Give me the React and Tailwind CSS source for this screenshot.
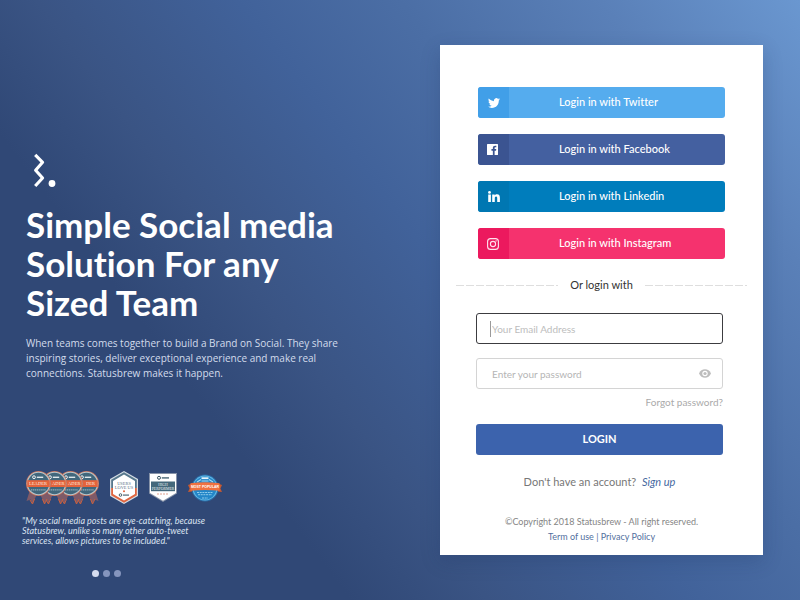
import React from "react";

const FONT = "font-[Lato,'Open_Sans',sans-serif] [font-variant-ligatures:none]";

function Logo() {
  return (
    <svg className="ml-[7px] h-[36px] w-[26px]" viewBox="0 0 26 36" role="img" aria-label="Statusbrew">
      <path
        d="M2.2 1.8 L9.6 9.3 L2.6 17.3 L9.6 25 L2.2 33"
        fill="none"
        stroke="#fff"
        strokeWidth="3.1"
        strokeLinejoin="round"
        strokeLinecap="butt"
      />
      <circle cx="19" cy="30.5" r="3.4" fill="#fff" />
    </svg>
  );
}

function Medal({ x, label, textX }) {
  return (
    <g transform={`translate(${x} 0)`}>
      <path
        d="M4 20 L0.5 31 L4.5 29.5 L6.5 34 L10.5 25 H14.5 L18.5 34 L20.5 29.5 L24.5 31 L21 20Z"
        fill="#7f5a68"
      />
      <path d="M4 30 L6.5 34 L8.5 29 M16.5 29 L18.5 34 L21 29" stroke="#c8603f" strokeWidth="1" fill="none" />
      <circle cx="12.5" cy="13.5" r="12.5" fill="#c9745b" />
      <circle cx="12.5" cy="13.5" r="11.7" fill="#b9c7cd" />
      <circle cx="12.5" cy="13.5" r="10.7" fill="#41677c" />
      <circle cx="8" cy="7.2" r="1.4" fill="none" stroke="#fff" strokeWidth="0.9" />
      <path d="M10.8 7.3 H17.2" stroke="#dfe8ec" strokeWidth="1.4" />
      <path d="M1.2 10.2 H23.8 V17 H1.2Z" fill="#e4633c" />
      <text x={textX} y="15.3" fontSize="4.6" fill="#ffe9df" fontFamily="Liberation Serif">
        {label}
      </text>
      <path d="M5 19.8 H20" stroke="#8fadb9" strokeWidth="1.2" strokeDasharray="1.3 .6" />
    </g>
  );
}

const MEDALS = [
  { x: 48, label: "DER", textX: 12 },
  { x: 32, label: "ADER", textX: 10 },
  { x: 16, label: "ADER", textX: 10 },
  { x: 0, label: "LEADER", textX: 3 },
];

function LeaderBadges() {
  return (
    <svg className="h-[35px] w-[73px]" viewBox="0 0 73 35" role="img" aria-label="Leader awards">
      {MEDALS.map((m) => (
        <Medal key={m.x} {...m} />
      ))}
    </svg>
  );
}

function UsersBadge() {
  return (
    <svg className="h-[33px] w-[28px]" viewBox="0 0 28 33" role="img" aria-label="Users love us">
      <path d="M14 0 L28 8 V25 L14 33 L0 25 V8Z" fill="#d5dde4" />
      <path d="M14 1.3 L26.8 8.7 V17 H1.2 V8.7Z" fill="#57788d" />
      <path d="M1.2 17 H26.8 V24.3 L14 31.7 L1.2 24.3Z" fill="#e0653f" />
      <path d="M14 3.6 L25 10 V23 L14 29.4 L3 23 V10Z" fill="#fff" />
      <g fontFamily="Liberation Serif" fontSize="4.4" textAnchor="middle" fill="#58717f">
        <text x="14" y="13.6">USERS</text>
        <text x="14" y="17.8">LOVE US</text>
      </g>
      <circle cx="14" cy="20.2" r="1" fill="#e0653f" />
      <circle cx="10.5" cy="24" r="1.3" fill="none" stroke="#35515f" strokeWidth=".9" />
      <path d="M13 24.1 H19" stroke="#5c7480" strokeWidth="1.3" />
    </svg>
  );
}

function PerformerBadge() {
  return (
    <svg className="h-[29px] w-[28px]" viewBox="0 0 28 29" role="img" aria-label="High performer">
      <path d="M0 0 H28 V20.5 L14 29 L0 20.5Z" fill="#8793a8" />
      <path d="M1 1 H27 V20 L14 27.8 L1 20Z" fill="#fff" />
      <path d="M2 8.5 H26 V18.2 H2Z" fill="#44687b" />
      <circle cx="10" cy="4.8" r="1.5" fill="none" stroke="#35515f" strokeWidth="1" />
      <path d="M12.8 4.9 H20" stroke="#55717f" strokeWidth="1.5" />
      <g fontFamily="Liberation Serif" textAnchor="middle" fill="#edf3f5">
        <text x="14" y="12.6" fontSize="3.8">HIGH</text>
        <text x="14" y="16.8" fontSize="3.8">PERFORMER</text>
      </g>
      <path d="M8 21 H20" stroke="#e1a18e" strokeWidth="1" strokeDasharray="2 1" />
    </svg>
  );
}

function PopularBadge() {
  return (
    <svg className="h-[28px] w-[34px]" viewBox="0 0 34 28" role="img" aria-label="Most popular">
      <circle cx="17" cy="14" r="13.5" fill="#2a6ea9" />
      <circle cx="17" cy="14" r="12.5" fill="#65bbe7" />
      <circle cx="17" cy="14" r="11.5" fill="#2386c8" />
      <path d="M13.5 4.2 H20.5" stroke="#e4f4fb" strokeWidth="1.8" />
      <path d="M9 8 L13 5.6 M25 8 L21 5.6 M13.5 7 H20.5" stroke="#a9d9ef" strokeWidth="1.2" />
      <path d="M0 11 L4 9.5 V17.5 L0 18 L1.6 14.5Z M34 11 L30 9.5 V17.5 L34 18 L32.4 14.5Z" fill="#c95a31" />
      <path d="M2.4 9.2 Q17 7.2 31.6 9.2 V16.8 Q17 15.4 2.4 16.8Z" fill="#f0713f" />
      <text x="17" y="13.6" fontSize="3.5" fontWeight="bold" textAnchor="middle" fill="#fff" fontFamily="Liberation Sans">
        MOST POPULAR
      </text>
      <path d="M9 18.5 H25 M10 20.7 H24 M14 24 H20" stroke="#9ad2ee" strokeWidth=".9" strokeDasharray="2 .7" />
    </svg>
  );
}

function TwitterIcon() {
  return (
    <svg className="size-[12px]" viewBox="0 0 24 24" fill="#fff" aria-hidden="true">
      <path d="M23.953 4.57a10 10 0 0 1-2.825.775 4.958 4.958 0 0 0 2.163-2.723c-.951.555-2.005.959-3.127 1.184a4.92 4.92 0 0 0-8.384 4.482C7.69 8.095 4.067 6.13 1.64 3.162a4.822 4.822 0 0 0-.666 2.475c0 1.71.87 3.213 2.188 4.096a4.904 4.904 0 0 1-2.228-.616v.06a4.923 4.923 0 0 0 3.946 4.827 4.996 4.996 0 0 1-2.212.085 4.936 4.936 0 0 0 4.604 3.417 9.867 9.867 0 0 1-6.102 2.105c-.39 0-.779-.023-1.17-.067a13.995 13.995 0 0 0 7.557 2.209c9.053 0 13.998-7.496 13.998-13.985 0-.21 0-.42-.015-.63A9.935 9.935 0 0 0 24 4.59z" />
    </svg>
  );
}

function FacebookIcon() {
  return (
    <svg className="-ml-[3px] size-[11px]" viewBox="0 0 24 24" fill="#fff" aria-hidden="true">
      <path d="M22.7 0H1.3C.6 0 0 .6 0 1.3v21.4c0 .7.6 1.3 1.3 1.3h11.5v-9.3H9.7v-3.6h3.1V8.4c0-3.1 1.9-4.8 4.7-4.8 1.3 0 2.5.1 2.8.1v3.3h-1.9c-1.5 0-1.8.7-1.8 1.8v2.3h3.6l-.5 3.6h-3.1V24h6.1c.7 0 1.3-.6 1.3-1.3V1.3c0-.7-.6-1.3-1.3-1.3z" />
    </svg>
  );
}

function LinkedinIcon() {
  return (
    <svg className="h-[11px] w-[12px]" viewBox="0 0 12 11" fill="#fff" aria-hidden="true">
      <circle cx="1.5" cy="1.4" r="1.4" />
      <path d="M.2 3.5h2.7V11H.2zM4.2 3.5h2.5v1c.4-.7 1.2-1.2 2.3-1.2 2.4 0 2.9 1.6 2.9 3.6V11H9.2V7.5c0-.9 0-1.9-1.1-1.9s-1.3 1-1.3 1.9V11H4.2z" />
    </svg>
  );
}

function InstagramIcon() {
  return (
    <svg className="-ml-[2px] size-[12px]" viewBox="0 0 12 12" fill="none" stroke="#ffe3ee" strokeWidth="1.1" aria-hidden="true">
      <rect x=".6" y=".6" width="10.8" height="10.8" rx="3" />
      <circle cx="6" cy="6" r="2.6" />
      <circle cx="9.1" cy="2.9" r=".7" fill="#ffe3ee" stroke="none" />
    </svg>
  );
}

function EyeIcon() {
  return (
    <svg className="h-[9px] w-[12px]" viewBox="0 0 12 9" aria-hidden="true">
      <path d="M0 4.5C1.2 1.7 3.4.3 6 .3s4.8 1.4 6 4.2C10.8 7.3 8.6 8.7 6 8.7S1.2 7.3 0 4.5z" fill="#bdbdbd" />
      <circle cx="6" cy="4.5" r="2.7" fill="#fff" />
      <circle cx="6" cy="4.5" r="1.6" fill="#bdbdbd" />
    </svg>
  );
}

const PROVIDERS = [
  { name: "Twitter", body: "bg-[#55acee]", side: "bg-[#419fe8]", Icon: TwitterIcon },
  { name: "Facebook", body: "bg-[#4460a0]", side: "bg-[#3b5491]", Icon: FacebookIcon },
  { name: "Linkedin", body: "bg-[#007dbc]", side: "bg-[#0077b2]", Icon: LinkedinIcon },
  { name: "Instagram", body: "bg-[#f5326e]", side: "bg-[#ec195e]", Icon: InstagramIcon },
];

function SocialButton({ name, body, side, Icon }) {
  return (
    <button type="button" className={`flex h-[31px] w-full overflow-hidden rounded-[3px] text-[11px] font-medium text-white ${body}`}>
      <span className={`flex h-full w-[31px] shrink-0 items-center justify-center ${side}`}>
        <Icon />
      </span>
      <span className="flex h-full flex-1 items-center pl-[50px]">Login in with {name}</span>
    </button>
  );
}

function Dashes() {
  return (
    <span className="h-px flex-1 bg-[repeating-linear-gradient(90deg,#dedede_0_8px,transparent_8px_10px)]" />
  );
}

function LoginCard() {
  return (
    <section className="flex w-[323px] shrink-0 flex-col bg-white pt-[42px] pb-[11px] shadow-[0_6px_18px_rgba(25,45,90,0.22)]">
      <div className="flex flex-col gap-4 px-[38px]">
        {PROVIDERS.map((p) => (
          <SocialButton key={p.name} {...p} />
        ))}
      </div>

      <div className="mt-[18px] flex items-center gap-3 px-4 text-[11px] leading-4 text-[#333]">
        <Dashes />
        <span>Or login with</span>
        <Dashes />
      </div>

      <form className="mt-5 flex flex-col pr-10 pl-9" onSubmit={(e) => e.preventDefault()}>
        <div className="relative">
          <input
            type="email"
            aria-label="Your Email Address"
            placeholder="Your Email Address"
            className="block h-[31px] w-full rounded-[3px] border border-[#3c3c40] bg-white px-[15px] text-[10px] outline-none placeholder:text-[#bdbdbd]"
          />
          <span className="absolute top-2 left-[14px] h-4 w-px bg-[#9a9a9a]" />
        </div>
        <div className="relative mt-[14px]">
          <input
            type="password"
            aria-label="Enter your password"
            placeholder="Enter your password"
            className="block h-[31px] w-full rounded-[3px] border border-[#d4d4d4] bg-white px-[15px] text-[10px] outline-none placeholder:text-[#b5b5b5]"
          />
          <button type="button" aria-label="Show password" className="absolute top-0 right-3 flex h-full items-center">
            <EyeIcon />
          </button>
        </div>
        <a href="#forgot" className="mt-[5px] self-end text-[10px] leading-4 text-[#aaa]">
          Forgot password?
        </a>
        <button type="submit" className="mt-[14px] h-[31px] w-full rounded-[3px] bg-[#3c63ad] text-[11px] font-bold text-white">
          LOGIN
        </button>
      </form>

      <p className="mt-[19px] pr-1 text-center text-[11px] leading-4 text-[#777]">
        Don't have an account?&nbsp;{" "}
        <a href="#signup" className="text-[#47699f] italic">
          Sign up
        </a>
      </p>
      <footer className="mt-[24px] text-center text-[9px] leading-[15px] text-[#858585]">
        <p>©Copyright 2018 Statusbrew - All right reserved.</p>
        <p className="text-[#526f9e]">
          <a href="#terms">Term of use</a> | <a href="#privacy">Privacy Policy</a>
        </p>
      </footer>
    </section>
  );
}

export default function App() {
  return (
    <main
      className={`flex min-h-screen items-start bg-[linear-gradient(53deg,#304876_0%,#304876_28%,#3a5484_39%,#41629a_55%,#4b6ea5_68%,#5a80b8_84%,#6a97d0_100%)] ${FONT}`}
    >
      <div className="flex flex-1 flex-col pt-[153px] pl-[26px] text-white">
        <Logo />
        <h1 className="mt-[16px] w-[330px] text-[35px] leading-[39px] font-bold">
          Simple Social media
          <br />
          Solution For any
          <br />
          Sized Team
        </h1>
        <p className="mt-[14px] font-['Open_Sans',sans-serif] text-[10px] leading-[15px] text-[#d3dcec]">
          When teams comes together to build a Brand on Social. They share
          <br />
          inspiring stories, deliver exceptional experience and make real
          <br />
          connections. Statusbrew makes it happen.
        </p>
        <div className="mt-[89px] flex items-center gap-[11px]">
          <LeaderBadges />
          <UsersBadge />
          <PerformerBadge />
          <PopularBadge />
        </div>
        <blockquote className="mt-[11px] -ml-1 w-[210px] text-[9px] leading-[10px] text-[#dbe3f1] italic">
          "My social media posts are eye-catching, because
          <br />
          Statusbrew, unlike so many other auto-tweet
          <br />
          services, allows pictures to be included."
        </blockquote>
        <div className="mt-[24px] flex gap-1 pl-[66px]">
          <button type="button" aria-label="Quote 1" className="size-[7px] rounded-full bg-[#d5dcef]" />
          <button type="button" aria-label="Quote 2" className="size-[7px] rounded-full bg-[#8595bd]" />
          <button type="button" aria-label="Quote 3" className="size-[7px] rounded-full bg-[#8595bd]" />
        </div>
      </div>
      <div className="py-[45px] pr-[37px]">
        <LoginCard />
      </div>
    </main>
  );
}
